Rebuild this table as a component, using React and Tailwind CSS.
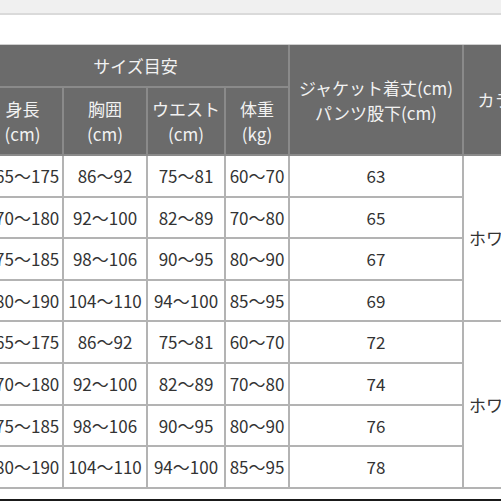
import React from "react";

const groups = [
  {
    color: "ホワイト",
    rows: [
      ["165～175", "86～92", "75～81", "60～70", "63"],
      ["170～180", "92～100", "82～89", "70～80", "65"],
      ["175～185", "98～106", "90～95", "80～90", "67"],
      ["180～190", "104～110", "94～100", "85～95", "69"],
    ],
  },
  {
    color: "ホワイト",
    rows: [
      ["165～175", "86～92", "75～81", "60～70", "72"],
      ["170～180", "92～100", "82～89", "70～80", "74"],
      ["175～185", "98～106", "90～95", "80～90", "76"],
      ["180～190", "104～110", "94～100", "85～95", "78"],
    ],
  },
];

const th = "border-2 border-[#8a8a8a] font-normal text-[#f2f2f2] text-center align-middle leading-[25px]";
const td = "border-2 border-[#b3b3b3] text-center align-middle text-[#333] h-[41.6px] p-0 whitespace-nowrap";

export default function App() {
  return (
    <div
      className="w-[501px] h-[501px] overflow-hidden bg-white flex flex-col"
      style={{ fontFamily: '"Noto Sans CJK JP", "Noto Sans", sans-serif' }}
    >
      <div className="h-[15px] shrink-0 bg-[#f0f0f0] border-b-2 border-[#dadada]" />
      <div className="h-[29px] shrink-0" />
      <div className="shrink-0 -ml-[19px] border-t border-[#cfcfcf]">
        <table className="table-fixed border-collapse text-[17px] w-[561px]">
          <colgroup>
            <col className="w-[81px]" />
            <col className="w-[84px]" />
            <col className="w-[78px]" />
            <col className="w-[64px]" />
            <col className="w-[174px]" />
            <col className="w-[80px]" />
          </colgroup>
          <thead className="bg-[#6b6b6b]">
            <tr className="h-[42px]">
              <th colSpan={4} className={th + " border-t-0"}>サイズ目安</th>
              <th rowSpan={2} className={th + " border-t-0"}>
                ジャケット着丈(cm)
                <br />
                パンツ股下(cm)
              </th>
              <th rowSpan={2} className={th + " border-t-0 whitespace-nowrap"}>カラー</th>
            </tr>
            <tr className="h-[68px]">
              <th className={th}>身長<br />(cm)</th>
              <th className={th}>胸囲<br />(cm)</th>
              <th className={th + " whitespace-nowrap"}>ウエスト<br />(cm)</th>
              <th className={th}>体重<br />(kg)</th>
            </tr>
          </thead>
          <tbody>
            {groups.map((g, gi) =>
              g.rows.map((r, ri) => (
                <tr key={gi + "-" + ri}>
                  {r.map((c, ci) => (
                    <td key={ci} className={td}>{c}</td>
                  ))}
                  {ri === 0 && (
                    <td rowSpan={4} className={td}>{g.color}</td>
                  )}
                </tr>
              ))
            )}
          </tbody>
        </table>
      </div>
      <div className="flex-1" />
      <div className="h-[2px] shrink-0 bg-[#1a1a1a]" />
    </div>
  );
}
